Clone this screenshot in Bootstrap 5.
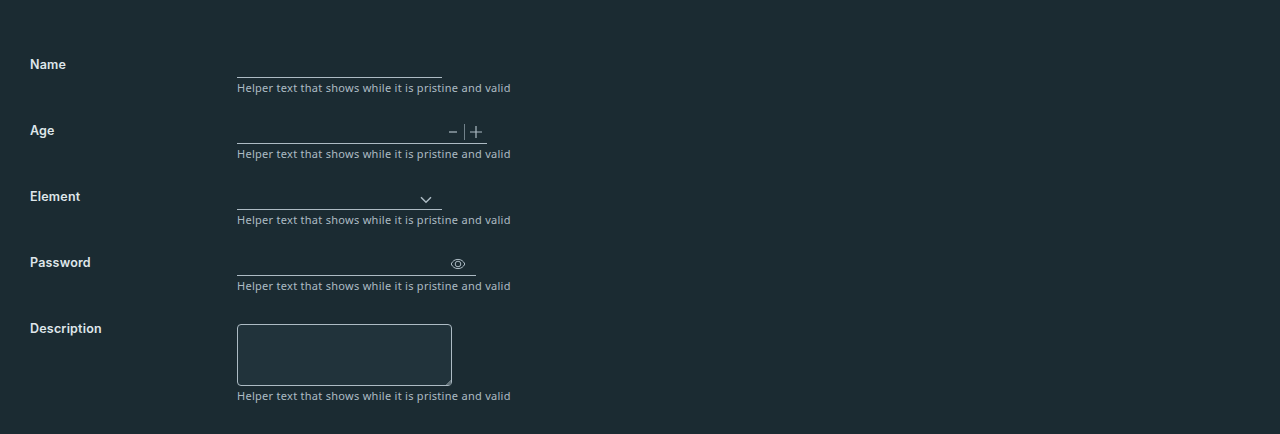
<!DOCTYPE html>
<html lang="en">
<head>
<meta charset="utf-8">
<meta name="viewport" content="width=device-width, initial-scale=1">
<title>Form</title>
<link href="https://cdn.jsdelivr.net/npm/bootstrap@5.3.0/dist/css/bootstrap.min.css" rel="stylesheet">
<style>
body{background:#1b2b32;color:#adbbc4;font-family:"Noto Sans",sans-serif;min-height:434px;overflow:hidden}
form{padding:54px 30px 0}
.form-row{min-height:66px}
.field-label{width:207px;color:#dfe6ea;font:600 12.5px/22px Inter,sans-serif;letter-spacing:.2px}
.field-line{height:24px;border-bottom:1px solid #adbbc4}
.field-line .form-control,.field-line .form-select{height:23px;min-height:0;padding:0 6px;background:transparent;border:0;border-radius:0;color:#e3eaed;font-size:13px;box-shadow:none}
.w-text{width:205px}.w-number{width:250px}.w-password{width:239px}
.helper{font-size:11px;line-height:20px;letter-spacing:.28px;white-space:nowrap}
.icon-btn{border:0;padding:0;background:none;color:inherit;line-height:0}
.area{display:block;width:215px;height:62px;min-height:0;margin-top:6px;background:#21333b;border:1px solid #adbbc4;border-radius:4px;color:#e3eaed}
.area::-webkit-resizer{background:linear-gradient(135deg,transparent 82%,#65747b 83%)}
svg{display:block;fill:none;stroke:currentColor}
</style>
<script src="https://cdn.jsdelivr.net/npm/bootstrap@5.3.0/dist/js/bootstrap.bundle.min.js"></script>
</head>
<body>
<form>
  <div class="form-row d-flex">
    <label class="field-label" for="name">Name</label>
    <div>
      <div class="field-line w-text d-flex"><input class="form-control" id="name" type="text"></div>
      <div class="helper">Helper text that shows while it is pristine and valid</div>
    </div>
  </div>
  <div class="form-row d-flex">
    <label class="field-label" for="age">Age</label>
    <div>
      <div class="field-line w-number d-flex">
        <input class="form-control" id="age" type="text" inputmode="numeric">
        <button class="icon-btn" type="button" aria-label="Decrease"><svg width="18" height="23"><path d="M1 12H9" stroke-width="1.2"/><path d="M16.5 4V20" stroke="#71818a"/></svg></button>
        <button class="icon-btn" type="button" aria-label="Increase"><svg width="21" height="23"><path d="M4 12H16M10 6V18" stroke-width="1.2"/></svg></button>
      </div>
      <div class="helper">Helper text that shows while it is pristine and valid</div>
    </div>
  </div>
  <div class="form-row d-flex">
    <label class="field-label" for="element">Element</label>
    <div>
      <div class="field-line w-text d-flex">
        <select class="form-select" id="element"><option></option></select>
        <svg class="flex-shrink-0" width="22" height="23"><path d="M1 11.2 6 16.2 11 11.2" stroke-width="1.5"/></svg>
      </div>
      <div class="helper">Helper text that shows while it is pristine and valid</div>
    </div>
  </div>
  <div class="form-row d-flex">
    <label class="field-label" for="password">Password</label>
    <div>
      <div class="field-line w-password d-flex">
        <input class="form-control" id="password" type="password">
        <button class="icon-btn" type="button" aria-label="Show password"><svg width="26" height="23"><path d="M1.200 12C2.500 9 5 7.400 8 7.400S13.500 9 14.800 12C13.500 15 11 16.600 8 16.600S2.500 15 1.200 12Z"/><circle cx="8" cy="12" r="2.8"/></svg></button>
      </div>
      <div class="helper">Helper text that shows while it is pristine and valid</div>
    </div>
  </div>
  <div class="form-row d-flex">
    <label class="field-label" for="description">Description</label>
    <div>
      <textarea class="form-control area" id="description"></textarea>
      <div class="helper">Helper text that shows while it is pristine and valid</div>
    </div>
  </div>
</form>
</body>
</html>
